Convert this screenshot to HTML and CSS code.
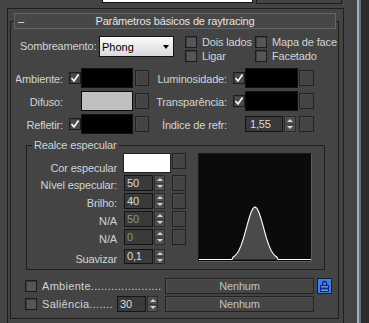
FILE: index.html
```html
<!DOCTYPE html>
<html>
<head>
<meta charset="utf-8">
<link rel="stylesheet" href="styles.css">
</head>
<body>
<div class="app">
  <div class="main">
    <div class="top-frag">
      <div class="frag-white"></div>
      <div class="frag-dark"></div>
    </div>
    <div class="outer">
      <div class="frame">
        <div class="head"><span class="minus">–</span><span class="title">Parâmetros básicos de raytracing</span><span></span></div>

        <div class="shade-row">
          <span class="shade-label">Sombreamento:</span>
          <div class="dropdown"><span>Phong</span><i class="caret"></i></div>
          <div class="opts">
            <span class="opt"><i class="cb"></i>Dois lados</span>
            <span class="opt"><i class="cb"></i>Mapa de face</span>
            <span class="opt"><i class="cb"></i>Ligar</span>
            <span class="opt"><i class="cb"></i>Facetado</span>
          </div>
        </div>

        <div class="colors">
          <div class="crow">
            <span class="clabel l">Ambiente:</span>
            <span class="cslot"><i class="cb on"><svg viewBox="0 0 10 10" width="10" height="10"><path d="M1.5,5 L4,8 L8.5,1.5" fill="none" stroke="#fff" stroke-width="1.6"/></svg></i></span>
            <span class="swatch sw-l black"></span>
            <span class="mapbtn l"></span>
            <span class="clabel r">Luminosidade:</span>
            <span class="cslot"><i class="cb on"><svg viewBox="0 0 10 10" width="10" height="10"><path d="M1.5,5 L4,8 L8.5,1.5" fill="none" stroke="#fff" stroke-width="1.6"/></svg></i></span>
            <span class="swatch sw-r black"></span>
            <span class="mapbtn r"></span>
          </div>
          <div class="crow">
            <span class="clabel l">Difuso:</span>
            <span class="cslot"></span>
            <span class="swatch sw-l grey"></span>
            <span class="mapbtn l"></span>
            <span class="clabel r">Transparência:</span>
            <span class="cslot"><i class="cb on"><svg viewBox="0 0 10 10" width="10" height="10"><path d="M1.5,5 L4,8 L8.5,1.5" fill="none" stroke="#fff" stroke-width="1.6"/></svg></i></span>
            <span class="swatch sw-r black"></span>
            <span class="mapbtn r"></span>
          </div>
          <div class="crow">
            <span class="clabel l">Refletir:</span>
            <span class="cslot"><i class="cb on"><svg viewBox="0 0 10 10" width="10" height="10"><path d="M1.5,5 L4,8 L8.5,1.5" fill="none" stroke="#fff" stroke-width="1.6"/></svg></i></span>
            <span class="swatch sw-l black"></span>
            <span class="mapbtn l"></span>
            <span class="clabel r">Índice de refr:</span>
            <span class="cslot"></span>
            <span class="spin-slot"><span class="field wide">1,55</span><span class="arrows wide"><i class="up"></i><i class="down"></i></span></span>
            <span class="mapbtn r"></span>
          </div>
        </div>

        <div class="group">
          <div class="legend">Realce especular</div>
          <div class="group-body">
            <div class="spec-col">
              <div class="srow first">
                <span class="slabel">Cor especular</span>
                <span class="swatch sw-s white"></span>
                <span class="mapbtn s"></span>
              </div>
              <div class="srow">
                <span class="slabel">Nível especular:</span>
                <span class="field">50</span>
                <span class="arrows"><i class="up"></i><i class="down"></i></span>
                <span class="mapbtn s2"></span>
              </div>
              <div class="srow">
                <span class="slabel">Brilho:</span>
                <span class="field">40</span>
                <span class="arrows"><i class="up"></i><i class="down"></i></span>
                <span class="mapbtn s2"></span>
              </div>
              <div class="srow">
                <span class="slabel">N/A</span>
                <span class="field dim">50</span>
                <span class="arrows"><i class="up"></i><i class="down"></i></span>
                <span class="mapbtn s2"></span>
              </div>
              <div class="srow">
                <span class="slabel">N/A</span>
                <span class="field dim">0</span>
                <span class="arrows"><i class="up"></i><i class="down"></i></span>
                <span class="mapbtn s2"></span>
              </div>
              <div class="srow last">
                <span class="slabel">Suavizar</span>
                <span class="field">0,1</span>
                <span class="arrows"><i class="up"></i><i class="down"></i></span>
              </div>
            </div>
            <div class="graph">
              <svg width="112" height="107" viewBox="0 0 112 107">
                <path d="M0,105.5 L33,105.5 L34,103.2 L36,101.7 L38,99.5 L40,96.2 L42,91.6 L44,85.8 L46,79 L48,71.6 L50,64.5 L52,58.5 L54,54.4 L56,53 L58,54.4 L60,58.5 L62,64.5 L64,71.6 L66,79 L68,85.8 L70,91.6 L72,96.2 L74,99.5 L76,101.7 L78,103.2 L79,105.5 L112,105.5" fill="#4a4a4a" stroke="#ffffff" stroke-width="1.1"/>
              </svg>
            </div>
          </div>
        </div>

        <div class="brow">
          <i class="cb"></i>
          <span class="dots w1">Ambiente.....................</span>
          <span class="btn">Nenhum</span>
          <span class="lock"><svg width="13" height="14" viewBox="0 0 13 14"><path d="M4.5,6.5 V4.3 a2,2 0 0 1 4,0 V6.5" fill="none" stroke="#0d1f95" stroke-width="1.3"/><rect x="2.5" y="6.5" width="8" height="6" fill="#7f96c4" stroke="#0d1f95" stroke-width="1"/><rect x="3" y="8.5" width="7" height="2" fill="#1a2a80"/></svg></span>
        </div>
        <div class="brow second">
          <i class="cb"></i>
          <span class="dots w2">Saliência.......</span>
          <span class="field">30</span>
          <span class="arrows"><i class="up"></i><i class="down"></i></span>
          <span class="btn b2">Nenhum</span>
        </div>
      </div>
    </div>
  </div>
  <div class="strip"></div>
</div>
</body>
</html>
```

FILE: styles.css
```css
* { box-sizing: border-box; margin: 0; padding: 0; }
html, body { width: 369px; height: 323px; overflow: hidden; background: #444444; }
body {
  font-family: "Liberation Sans", Arial, sans-serif;
  font-size: 11px;
  letter-spacing: -0.15px;
  color: #d0d4d8;
}
i { display: block; font-style: normal; }

.app { display: flex; height: 323px; }
.main { width: 357px; flex: none; }
.strip {
  flex: 1;
  border-left: 2px solid #a2aebb;
  box-shadow: inset 2px 0 0 #5d6f83;
  background: #2c2c2c;
}

.top-frag { display: flex; height: 8px; }
.frag-white { margin-left: 102px; width: 151px; height: 3px; background: #fff; border: 1px solid #151515; border-top: 0; }
.frag-dark { margin-left: 3px; width: 86px; height: 4px; border: 1px solid #1c1c1c; border-top: 0; }

.outer {
  margin-left: 7px;
  width: 337px;
  height: 315px;
  border: 1px solid #1e1e1e;
  border-bottom: 0;
}
.frame {
  margin: 12px 0 0 2px;
  width: 329px;
  height: 298px;
  border: 1px solid #1e1e1e;
}
.head {
  margin: -9px 2px 0 3px;
  height: 16px;
  border: 1px solid #646464;
  background: #474747;
  display: grid;
  grid-template-columns: 1fr auto 1fr;
  align-items: center;
  line-height: 14px;
  color: #e4e4e4;
}
.minus { padding-left: 3px; }

/* shading row */
.shade-row { display: flex; margin-top: 6px; height: 28px; }
.shade-label { margin: 1px 0 0 9px; width: 79px; line-height: 21px; }
.dropdown {
  margin-top: 1px;
  width: 75px;
  height: 21px;
  border: 1px solid #111;
  background: linear-gradient(#fbfbfb, #d9d9d9);
  color: #000;
  display: flex;
  align-items: center;
  justify-content: space-between;
  padding: 0 4px 0 2px;
  letter-spacing: 0;
}
.caret { width: 0; height: 0; border-left: 3.5px solid transparent; border-right: 3.5px solid transparent; border-top: 4px solid #000; }
.opts { margin-left: 11px; display: grid; grid-template-columns: 70px auto; grid-auto-rows: 14px; }
.opt { display: flex; align-items: center; white-space: nowrap; }
.opt .cb { margin-right: 5px; }

.cb {
  width: 12px;
  height: 12px;
  flex: none;
  border: 1px solid #1c1c1c;
  background: #565656;
  box-shadow: inset 1px 1px 0 #3c3c3c;
}
.cb.on { background: #4a4a4a; display: flex; align-items: center; justify-content: center; }
.cb.on svg { display: block; }

/* colour rows */
.colors { margin-top: 5px; display: flex; flex-direction: column; gap: 3px; }
.crow { display: flex; align-items: center; height: 20px; }
.clabel {
  flex: none;
  display: flex;
  justify-content: flex-end;
  overflow: hidden;
  white-space: nowrap;
  padding-top: 2px;
}
.clabel.l { margin-left: 5px; width: 47px; }
.clabel.r { width: 78px; }
.cslot { margin-left: 6px; width: 12px; height: 12px; flex: none; }

.swatch { height: 20px; border: 1px solid #111; flex: none; }
.sw-l { width: 52px; }
.sw-r { width: 53px; }
.sw-s { width: 48px; margin-left: 6px; }
.black { background: #000; }
.grey { background: #c0c0c0; border-color: #0a0a0a; }
.white { background: #fff; border-color: #222; }

.mapbtn {
  flex: none;
  width: 14px;
  height: 16px;
  border: 1px solid #222;
  box-shadow: inset 1px 1px 0 #4b4b4b;
}
.mapbtn.l { margin-left: 2px; }
.mapbtn.r { margin-left: 1px; width: 15px; }
.mapbtn.s { margin-left: 1px; }
.mapbtn.s2 { margin-left: 7px; }

.spin-slot { width: 53px; display: flex; align-items: center; flex: none; }

.field {
  flex: none;
  width: 29px;
  height: 16px;
  border: 1px solid #141414;
  background: #3a3a3a;
  padding-left: 2px;
  line-height: 14px;
  color: #dcdcdc;
}
.field.wide { width: 38px; padding-left: 4px; }
.field.dim { color: #8e8e8e; }
.arrows {
  flex: none;
  margin-left: 1px;
  width: 11px;
  height: 16px;
  display: flex;
  flex-direction: column;
  border: 1px solid #2c2c2c;
  background: #4f4f4f;
}
.arrows.wide { width: 12px; }
.arrows .up, .arrows .down { flex: 1; display: flex; align-items: center; justify-content: center; }
.arrows .up { border-bottom: 1px solid #3a3a3a; }
.arrows .up::before { content: ""; border-left: 3px solid transparent; border-right: 3px solid transparent; border-bottom: 3px solid #d4d4d4; }
.arrows .down::before { content: ""; border-left: 3px solid transparent; border-right: 3px solid transparent; border-top: 3px solid #d4d4d4; }

/* specular group */
.group {
  margin: 11px 0 0 15px;
  width: 299px;
  height: 125px;
  border: 1px solid #1e1e1e;
  display: flex;
  flex-direction: column;
  align-items: flex-start;
}
.legend {
  margin: -7px 0 0 5px;
  padding: 0 2px;
  background: #444444;
  line-height: 13px;
  height: 13px;
}
.group-body { display: flex; margin-top: 1px; }
.spec-col { width: 159px; display: flex; flex-direction: column; }
.srow { display: flex; align-items: flex-start; height: 16px; margin-top: 2px; }
.srow.first { height: 20px; margin-top: 0; }
.srow.last { margin-top: 4px; height: 15px; }
.srow.last .field, .srow.last .arrows { height: 15px; line-height: 13px; }
.slabel {
  flex: none;
  width: 90px;
  text-align: right;
  white-space: nowrap;
  padding-top: 3px;
  line-height: 14px;
}
.srow.first .slabel { padding-top: 8px; }
.srow .field { margin-left: 7px; }

.graph {
  margin-left: 12px;
  width: 114px;
  height: 109px;
  border: 1px solid #5c5c5c;
  border-top-color: #1a1a1a;
  border-left-color: #1a1a1a;
  background: #0b0b0b;
}
.graph svg { display: block; }

/* bottom rows */
.brow { display: flex; align-items: center; height: 16px; margin-top: 8px; }
.brow.second { margin-top: 2px; }
.brow .cb { margin-left: 14px; }
.dots { flex: none; margin-left: 5px; white-space: nowrap; letter-spacing: 0.3px; }
.dots.w1 { width: 123px; }
.dots.w2 { width: 75px; }
.btn {
  flex: none;
  width: 149px;
  height: 16px;
  border: 1px solid #222;
  background: #454545;
  box-shadow: inset 1px 1px 0 #4e4e4e;
  text-align: center;
  line-height: 14px;
  color: #b9c4cf;
}
.btn.b2 { margin-left: 7px; }
.lock {
  flex: none;
  margin-left: 3px;
  width: 15px;
  height: 16px;
  border: 1px solid #1e1e1e;
  background: #3f80de;
}
.lock svg { display: block; }
```
